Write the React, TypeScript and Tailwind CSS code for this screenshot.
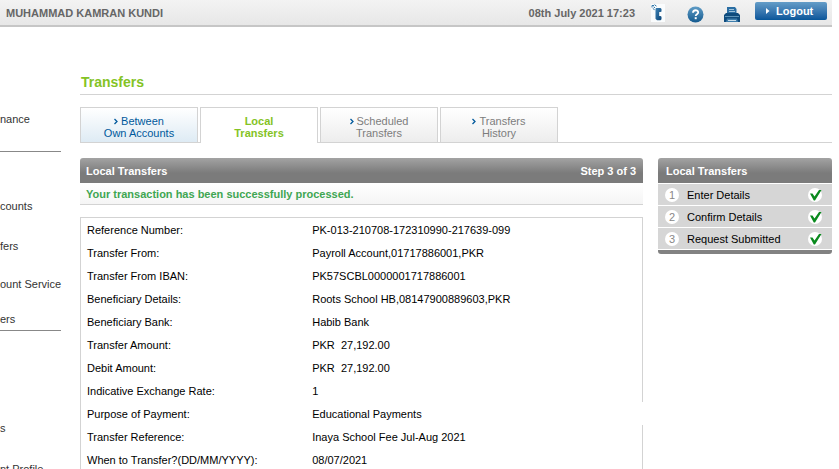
import { Fragment } from 'react'

const SIDE_GROUPS = [
  { pad: 'pt-[84px] pb-6', items: [{ label: 'nance', gap: '' }] },
  {
    pad: 'pt-[46px] pb-[3px]',
    items: [
      { label: 'counts', gap: '' },
      { label: 'fers', gap: 'mt-6' },
      { label: 'ount Service', gap: 'mt-[22px]' },
      { label: 'ers', gap: 'mt-[19px]' },
    ],
  },
]

const TABS = [
  { lines: ['Between', 'Own Accounts'], style: 'from-white to-[#deebf4] text-[#00599c]' },
  { lines: ['Local', 'Transfers'], active: true },
  { lines: ['Scheduled', 'Transfers'], style: 'from-white to-[#ededed] text-[#7d7d7d]' },
  { lines: ['Transfers', 'History'], style: 'from-white to-[#ededed] text-[#7d7d7d]' },
]

const DETAILS = [
  { label: 'Reference Number:', value: 'PK-013-210708-172310990-217639-099' },
  { label: 'Transfer From:', value: 'Payroll Account,01717886001,PKR' },
  { label: 'Transfer From IBAN:', value: 'PK57SCBL0000001717886001' },
  { label: 'Beneficiary Details:', value: 'Roots School HB,08147900889603,PKR' },
  { label: 'Beneficiary Bank:', value: 'Habib Bank' },
  { label: 'Transfer Amount:', value: 'PKR  27,192.00' },
  { label: 'Debit Amount:', value: 'PKR  27,192.00' },
  { label: 'Indicative Exchange Rate:', value: '1' },
  { label: 'Purpose of Payment:', value: 'Educational Payments', open: true },
  { label: 'Transfer Reference:', value: 'Inaya School Fee Jul-Aug 2021' },
  { label: 'When to Transfer?(DD/MM/YYYY):', value: '08/07/2021' },
]

const STEPS = ['Enter Details', 'Confirm Details', 'Request Submitted']

function PhoneIcon() {
  return (
    <svg width="14" height="18" viewBox="0 0 14 18">
      <defs>
        <linearGradient id="phone" x1="0" y1="0" x2="1" y2="1">
          <stop offset="0" stopColor="#3d82b5" />
          <stop offset="1" stopColor="#0a4578" />
        </linearGradient>
      </defs>
      <rect width="14" height="18" fill="#fafcfd" />
      <path d="M5 4h4.500l1 1v2.500L9.500 8H8.200v4h1.300l1 .7v2.500l-1 1H6l-1.500-1.500V5z" fill="url(#phone)" />
      <path d="M1 1.500h2M1 1.500v2M3.500.7l2 1.500M1.800 4.500l1.800 1.200M2.500 2.800l1.500 1" stroke="#3077aa" strokeWidth="1" fill="none" />
    </svg>
  )
}

function HelpIcon() {
  return (
    <svg width="17" height="17" viewBox="0 0 17 17">
      <defs>
        <linearGradient id="help" x1="0" y1="0" x2="0" y2="1">
          <stop offset="0" stopColor="#5f9cc6" />
          <stop offset="1" stopColor="#145a8f" />
        </linearGradient>
      </defs>
      <circle cx="8.500" cy="8.500" r="8" fill="url(#help)" />
      <path d="M6 6.700c0-3.200 5.200-3.200 5.200-.3 0 1.800-2.500 1.900-2.500 3.600" fill="none" stroke="#fff" strokeWidth="1.800" />
      <rect x="7.700" y="11.200" width="2" height="2" fill="#fff" />
    </svg>
  )
}

function PrinterIcon() {
  return (
    <svg width="16" height="16" viewBox="0 0 16 16">
      <path d="M3 0h8l1.500 2v5H3z" fill="#2b6ea3" />
      <path d="M5 2.500h5M5 4.500h6" stroke="#9fc2da" strokeWidth="1" />
      <path d="M2 6h12l2 2v7H0V8z" fill="#0e4b7d" />
      <path d="M1 9.500h14" stroke="#5d93b8" strokeWidth="1" />
      <path d="M3 11.500h10l1 3.500H2z" fill="#3f7eac" />
      <path d="M4 13.500h8" stroke="#c9dde9" strokeWidth="1" />
    </svg>
  )
}

function Tick() {
  return (
    <svg width="14" height="14" viewBox="0 0 14 14">
      <circle cx="7" cy="7" r="7" fill="#fff" />
      <path d="M2 5.500h2.500L6.500 8.500 11 2h2.500L7 12.500H5.800z" fill="#0a8a1e" />
    </svg>
  )
}

export default function App() {
  return (
    <div className="h-screen overflow-hidden bg-white pr-[7px] font-['Liberation_Sans',Arial,sans-serif] text-[11px] leading-4 text-black">
      <header className="flex h-[27px] items-start justify-between border-b-2 border-[#c6c6c6] bg-linear-to-b from-[#f3f3f3] to-[#e7e7e7] pl-[6px] pr-[5px] font-bold text-[#666]">
        <span className="pt-[5px]">MUHAMMAD KAMRAN KUNDI</span>
        <div className="flex items-start">
          <span className="pt-[5px]">08th July 2021 17:23</span>
          <button aria-label="Contact us" className="ml-4 mt-1"><PhoneIcon /></button>
          <button aria-label="Help" className="ml-[22px] mt-[6px]"><HelpIcon /></button>
          <button aria-label="Print" className="ml-5 mt-[7px]"><PrinterIcon /></button>
          <button className="ml-[15px] mt-[2px] flex h-[18px] w-[72px] items-center rounded-[2px] bg-linear-to-b from-[#649dc8] to-[#06569a] pl-[11px] text-white">
            <svg width="4" height="6" viewBox="0 0 4 6" className="mr-[6px]"><path d="M0 0l3.500 3L0 6z" fill="#fff" /></svg>
            Logout
          </button>
        </div>
      </header>

      <div className="flex">
        <nav className="w-20 shrink-0 pr-[19px] text-[#333]">
          {SIDE_GROUPS.map((g) => (
            <ul key={g.pad} className={`border-b border-[#888] ${g.pad}`}>
              {g.items.map((it) => (
                <li key={it.label} className={it.gap}><a href="#" className="block whitespace-nowrap">{it.label}</a></li>
              ))}
            </ul>
          ))}
          <ul className="pt-[89px]">
            <li><a href="#" className="block">s</a></li>
            <li className="mt-[25px]"><a href="#" className="block whitespace-nowrap">nt Profile</a></li>
          </ul>
        </nav>

        <main className="min-w-0 flex-1">
          <h1 className="mt-[47px] border-b border-[#d3d3d3] pb-1 pl-px text-[14px] font-bold leading-4 text-[#84c325]">Transfers</h1>

          <div className="mt-3 flex h-9 gap-[2px] border-b border-[#d3d3d3]">
            {TABS.map((tab) => (
              <a key={tab.lines.join(' ')} href="#"
                className={`w-[118px] border-x border-t border-[#d3d3d3] pt-[7px] text-center leading-3 ${tab.active ? 'h-9 bg-white font-bold text-[#84c325]' : `h-[35px] bg-linear-to-b ${tab.style}`}`}>
                {!tab.active && (
                  <svg width="4" height="7" viewBox="0 0 4 7" className="mr-[3px] inline-block align-baseline"><path d="M.5 1l2.500 2.500L.5 6" fill="none" stroke="#00599c" strokeWidth="1.300" /></svg>
                )}
                {tab.lines.map((line, i) => (
                  <Fragment key={line}>{i > 0 && <br />}{line}</Fragment>
                ))}
              </a>
            ))}
          </div>

          <div className="mt-[15px] flex items-start gap-[15px]">
            <section className="min-w-0 flex-1">
              <div className="flex h-[25px] items-center justify-between rounded-t-[3px] bg-linear-to-b from-[#a3a3a3] to-[#7b7b7b] to-60% pl-[6px] pr-[7px] font-bold text-white">
                <h2>Local Transfers</h2>
                <span>Step 3 of 3</span>
              </div>
              <p className="h-[22px] border-b border-[#d3d3d3] bg-linear-to-b from-white to-[#f5f5f5] pl-[6px] pt-[3px] font-bold text-[#3fa652]">Your transaction has been successfully processed.</p>

              <table className="mt-3 w-full border-separate border-spacing-0 border-t border-[#d3d3d3] text-left">
                <tbody>
                  {DETAILS.map((d) => (
                    <tr key={d.label} className="h-[23px]">
                      <th className="w-[40%] border-l border-[#d3d3d3] pl-[6px] font-normal">{d.label}</th>
                      <td className={`whitespace-pre pl-[7px] ${d.open ? '' : 'border-r border-[#d3d3d3]'}`}>{d.value}</td>
                    </tr>
                  ))}
                </tbody>
              </table>
            </section>

            <aside className="w-[174px] shrink-0">
              <h2 className="flex h-[25px] items-center rounded-t-[3px] bg-linear-to-b from-[#a3a3a3] to-[#7b7b7b] to-60% pl-2 font-bold text-white">Local Transfers</h2>
              <ol className="mt-px flex flex-col gap-px">
                {STEPS.map((step, i) => (
                  <li key={step} className="flex h-[21px] items-center bg-[#d6d6d6] pl-[7px] pr-[10px]">
                    <span className="mr-2 h-[14px] w-[14px] rounded-full bg-white text-center leading-[14px] text-[#888]">{i + 1}</span>
                    <span className="flex-1">{step}</span>
                    <Tick />
                  </li>
                ))}
              </ol>
              <div className="mt-px h-1 rounded-b-[3px] bg-[#828282]" />
            </aside>
          </div>
        </main>
      </div>
    </div>
  )
}
